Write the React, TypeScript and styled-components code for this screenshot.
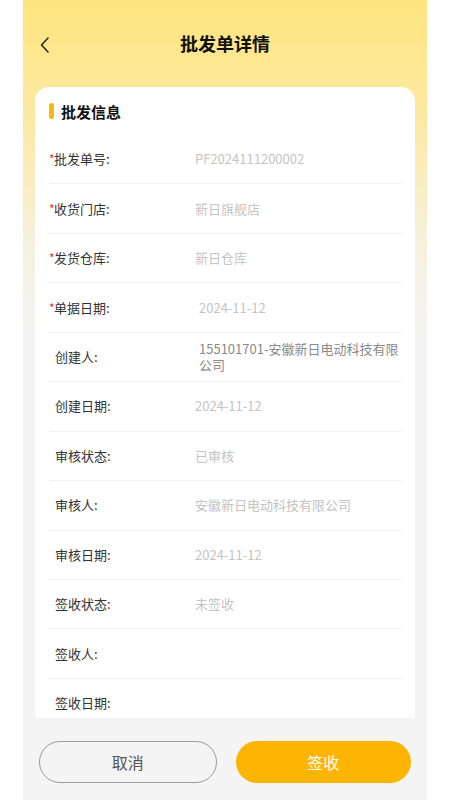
import styled, { createGlobalStyle } from 'styled-components';

const GlobalStyle = createGlobalStyle`
  html, body {
    margin: 0;
    padding: 0;
    background: #ffffff;
  }
  body {
    font-family: "Noto Sans CJK SC", "Noto Sans", sans-serif;
  }
  * {
    box-sizing: border-box;
  }
`;

type Field = {
  label: string;
  value?: string;
  required?: boolean;
  dark?: boolean;
  indent?: boolean;
};

const fields: Field[] = [
  { label: '批发单号:', value: 'PF2024111200002', required: true },
  { label: '收货门店:', value: '新日旗舰店', required: true },
  { label: '发货仓库:', value: '新日仓库', required: true },
  { label: '单据日期:', value: '2024-11-12', required: true, indent: true },
  { label: '创建人:', value: '155101701-安徽新日电动科技有限公司', dark: true, indent: true },
  { label: '创建日期:', value: '2024-11-12' },
  { label: '审核状态:', value: '已审核' },
  { label: '审核人:', value: '安徽新日电动科技有限公司' },
  { label: '审核日期:', value: '2024-11-12' },
  { label: '签收状态:', value: '未签收' },
  { label: '签收人:' },
  { label: '签收日期:' },
];

function App() {
  return (
    <>
      <GlobalStyle />
      <Frame>
        <Header>
          <BackButton aria-label="back">
            <svg width="10" height="16" viewBox="0 0 10 16" fill="none">
              <polyline
                points="8,1 1.5,8 8,15"
                stroke="#222"
                strokeWidth="1.5"
                strokeLinecap="round"
                strokeLinejoin="round"
              />
            </svg>
          </BackButton>
          <Title>批发单详情</Title>
        </Header>
        <Scroll>
          <Card>
            <SectionTitle>
              <Bar />
              批发信息
            </SectionTitle>
            {fields.map((f) => (
              <Row key={f.label}>
                <Label>
                  <Star $show={!!f.required}>*</Star>
                  {f.label}
                </Label>
                <Value $dark={f.dark} $indent={f.indent}>
                  {f.value}
                </Value>
              </Row>
            ))}
          </Card>
        </Scroll>
        <Footer>
          <CancelButton>取消</CancelButton>
          <SignButton>签收</SignButton>
        </Footer>
      </Frame>
    </>
  );
}

const Frame = styled.main`
  width: 404px;
  height: 800px;
  margin: 0 0 0 23px;
  display: flex;
  flex-direction: column;
  overflow: hidden;
  background: linear-gradient(
    180deg,
    #fee47c 0px,
    #fde894 70px,
    #fbeaa8 130px,
    #f6f0dc 240px,
    #f4f4f4 340px,
    #f4f4f4 100%
  );
`;

const Header = styled.header`
  height: 87px;
  flex-shrink: 0;
  position: relative;
  display: flex;
  align-items: center;
  justify-content: center;
  padding-bottom: 2px;
`;

const BackButton = styled.button`
  position: absolute;
  left: 17px;
  top: 37px;
  border: none;
  background: none;
  padding: 0;
  display: flex;
`;

const Title = styled.h1`
  margin: 0;
  font-size: 18px;
  font-weight: 700;
  color: #111;
  line-height: 24px;
`;

const Scroll = styled.section`
  flex: 1;
  overflow: hidden;
  padding: 0 12px;
`;

const Card = styled.div`
  background: #ffffff;
  border-radius: 14px;
  padding: 0 13px 0 14px;
  min-height: 100%;
`;

const SectionTitle = styled.h2`
  margin: 0;
  height: 48px;
  display: flex;
  align-items: center;
  gap: 7px;
  font-size: 15px;
  font-weight: 700;
  color: #111;
`;

const Bar = styled.span`
  width: 5px;
  height: 16px;
  border-radius: 3px;
  background: #f6b90f;
`;

const Row = styled.div`
  min-height: 49.45px;
  display: flex;
  align-items: center;
  border-bottom: 1px solid #efefef;
  font-size: 13px;
  line-height: 16px;
  padding: 6px 0;
`;

const Label = styled.div`
  width: 146px;
  flex-shrink: 0;
  color: #333;
  display: flex;
  align-items: center;
`;

const Star = styled.span<{ $show: boolean }>`
  width: 5px;
  margin-right: ${({ $show }) => ($show ? '0' : '1px')};
  color: ${({ $show }) => ($show ? '#d9363e' : 'transparent')};
  font-size: 12px;
`;

const Value = styled.div<{ $dark?: boolean; $indent?: boolean }>`
  flex: 1;
  padding-left: ${({ $indent }) => ($indent ? '4px' : '0')};
  color: ${({ $dark }) => ($dark ? '#8a8a8a' : '#c4c4c4')};
  word-break: break-all;
`;

const Footer = styled.footer`
  height: 82px;
  flex-shrink: 0;
  display: flex;
  gap: 19px;
  padding: 23px 16px 17px 16px;
`;

const ButtonBase = styled.button`
  flex: 1;
  height: 42px;
  border-radius: 21px;
  font-family: inherit;
  font-size: 16px;
  display: flex;
  align-items: center;
  justify-content: center;
`;

const CancelButton = styled(ButtonBase)`
  background: #f4f4f4;
  border: 1px solid #9a9a9a;
  color: #555;
`;

const SignButton = styled(ButtonBase)`
  background: #fdb402;
  border: none;
  color: #ffffff;
`;

export default App;
